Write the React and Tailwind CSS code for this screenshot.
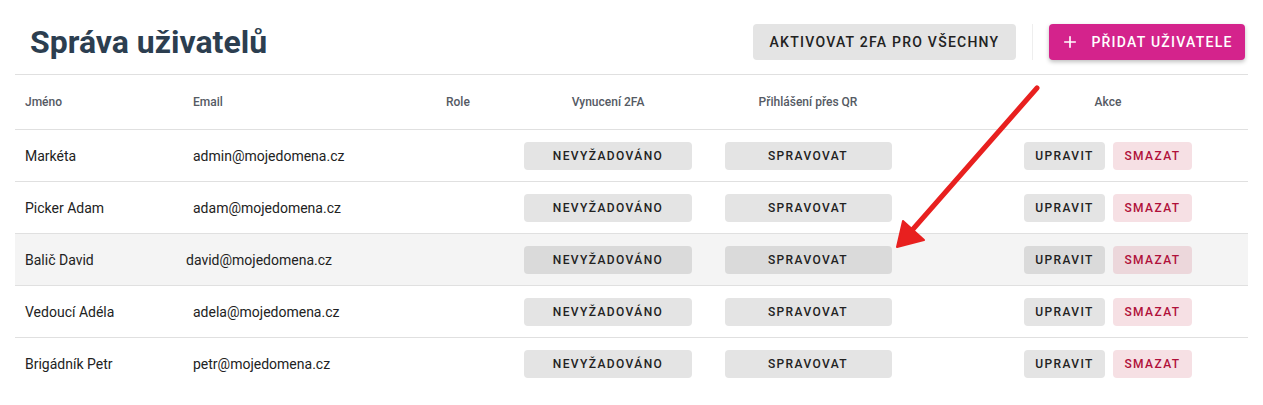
import { Plus } from 'lucide-react';

const users = [
    { name: 'Markéta', email: 'admin@mojedomena.cz' },
    { name: 'Picker Adam', email: 'adam@mojedomena.cz' },
    { name: 'Balič David', email: 'david@mojedomena.cz', active: true },
    { name: 'Vedoucí Adéla', email: 'adela@mojedomena.cz' },
    { name: 'Brigádník Petr', email: 'petr@mojedomena.cz' },
];

const cols = 'grid grid-cols-[168px_253px_72px_200px_200px_1fr] items-center';

function SmallButton({ children, className = '' }) {
    return (
        <button className={`h-7 rounded text-xs font-medium tracking-[1.4px] ${className}`}>
            {children}
        </button>
    );
}

export default function App() {
    return (
        <div className="relative px-[15px] bg-white text-[#222] font-['Roboto',sans-serif]">
            {/* Header */}
            <div className="flex items-center justify-between h-[74px] pt-[10px] pl-[15px] pr-[3px]">
                <h1 className="text-[32px] font-bold text-[#2c3e50]">Správa uživatelů</h1>
                <div className="flex items-center gap-4">
                    <button className="h-9 w-[263px] rounded bg-[#e4e4e4] text-sm font-medium tracking-[1.25px] text-[#222]">
                        AKTIVOVAT 2FA PRO VŠECHNY
                    </button>
                    <div className="w-px h-9 bg-[#eeeeee]" />
                    <button className="h-9 w-[196px] rounded bg-[#d4238c] text-sm font-medium tracking-[1.25px] text-white flex items-center justify-center gap-3 shadow-[0_2px_4px_rgba(0,0,0,0.25)]">
                        <Plus size={18} strokeWidth={2.2} />
                        PŘIDAT UŽIVATELE
                    </button>
                </div>
            </div>

            {/* Table */}
            <div className="border-t border-[#e0e0e0]">
                <div className={`${cols} h-[55px] border-b border-[#e0e0e0] text-xs font-medium text-[#555a64]`}>
                    <div className="pl-[10px]">Jméno</div>
                    <div className="pl-[10px]">Email</div>
                    <div className="pl-[10px]">Role</div>
                    <div className="text-center">Vynucení 2FA</div>
                    <div className="text-center">Přihlášení přes QR</div>
                    <div className="pl-[60px] text-center">Akce</div>
                </div>

                {users.map((user, i) => (
                    <div
                        key={i}
                        className={`${cols} h-[52px] text-sm ${i < users.length - 1 ? 'border-b border-[#e0e0e0]' : ''} ${user.active ? 'bg-[#f4f4f4]' : ''}`}
                    >
                        <div className="pl-[10px]">{user.name}</div>
                        <div className={user.active ? 'pl-[3px]' : 'pl-[10px]'}>{user.email}</div>
                        <div />
                        <div className="flex justify-center">
                            <SmallButton className={`w-[168px] ${user.active ? 'bg-[#dadada]' : 'bg-[#e4e4e4]'}`}>
                                NEVYŽADOVÁNO
                            </SmallButton>
                        </div>
                        <div className="flex justify-center">
                            <SmallButton className={`w-[167px] ${user.active ? 'bg-[#dadada]' : 'bg-[#e4e4e4]'}`}>
                                SPRAVOVAT
                            </SmallButton>
                        </div>
                        <div className="pl-[60px] flex justify-center gap-2">
                            <SmallButton className={`w-[81px] ${user.active ? 'bg-[#dadada]' : 'bg-[#e4e4e4]'}`}>
                                UPRAVIT
                            </SmallButton>
                            <SmallButton className={`w-[79px] text-[#b0103a] ${user.active ? 'bg-[#ecd7db]' : 'bg-[#f6e0e4]'}`}>
                                SMAZAT
                            </SmallButton>
                        </div>
                    </div>
                ))}
                <div className="h-4" />
            </div>

            {/* Red annotation arrow */}
            <svg className="absolute inset-0 pointer-events-none" width="1263" height="405">
                <line x1="1037" y1="88" x2="907" y2="236" stroke="#e8201f" strokeWidth="5" strokeLinecap="round" />
                <polygon points="897,247 903,221 924,240" fill="#e8201f" stroke="#e8201f" strokeWidth="2" strokeLinejoin="round" />
            </svg>
        </div>
    );
}
